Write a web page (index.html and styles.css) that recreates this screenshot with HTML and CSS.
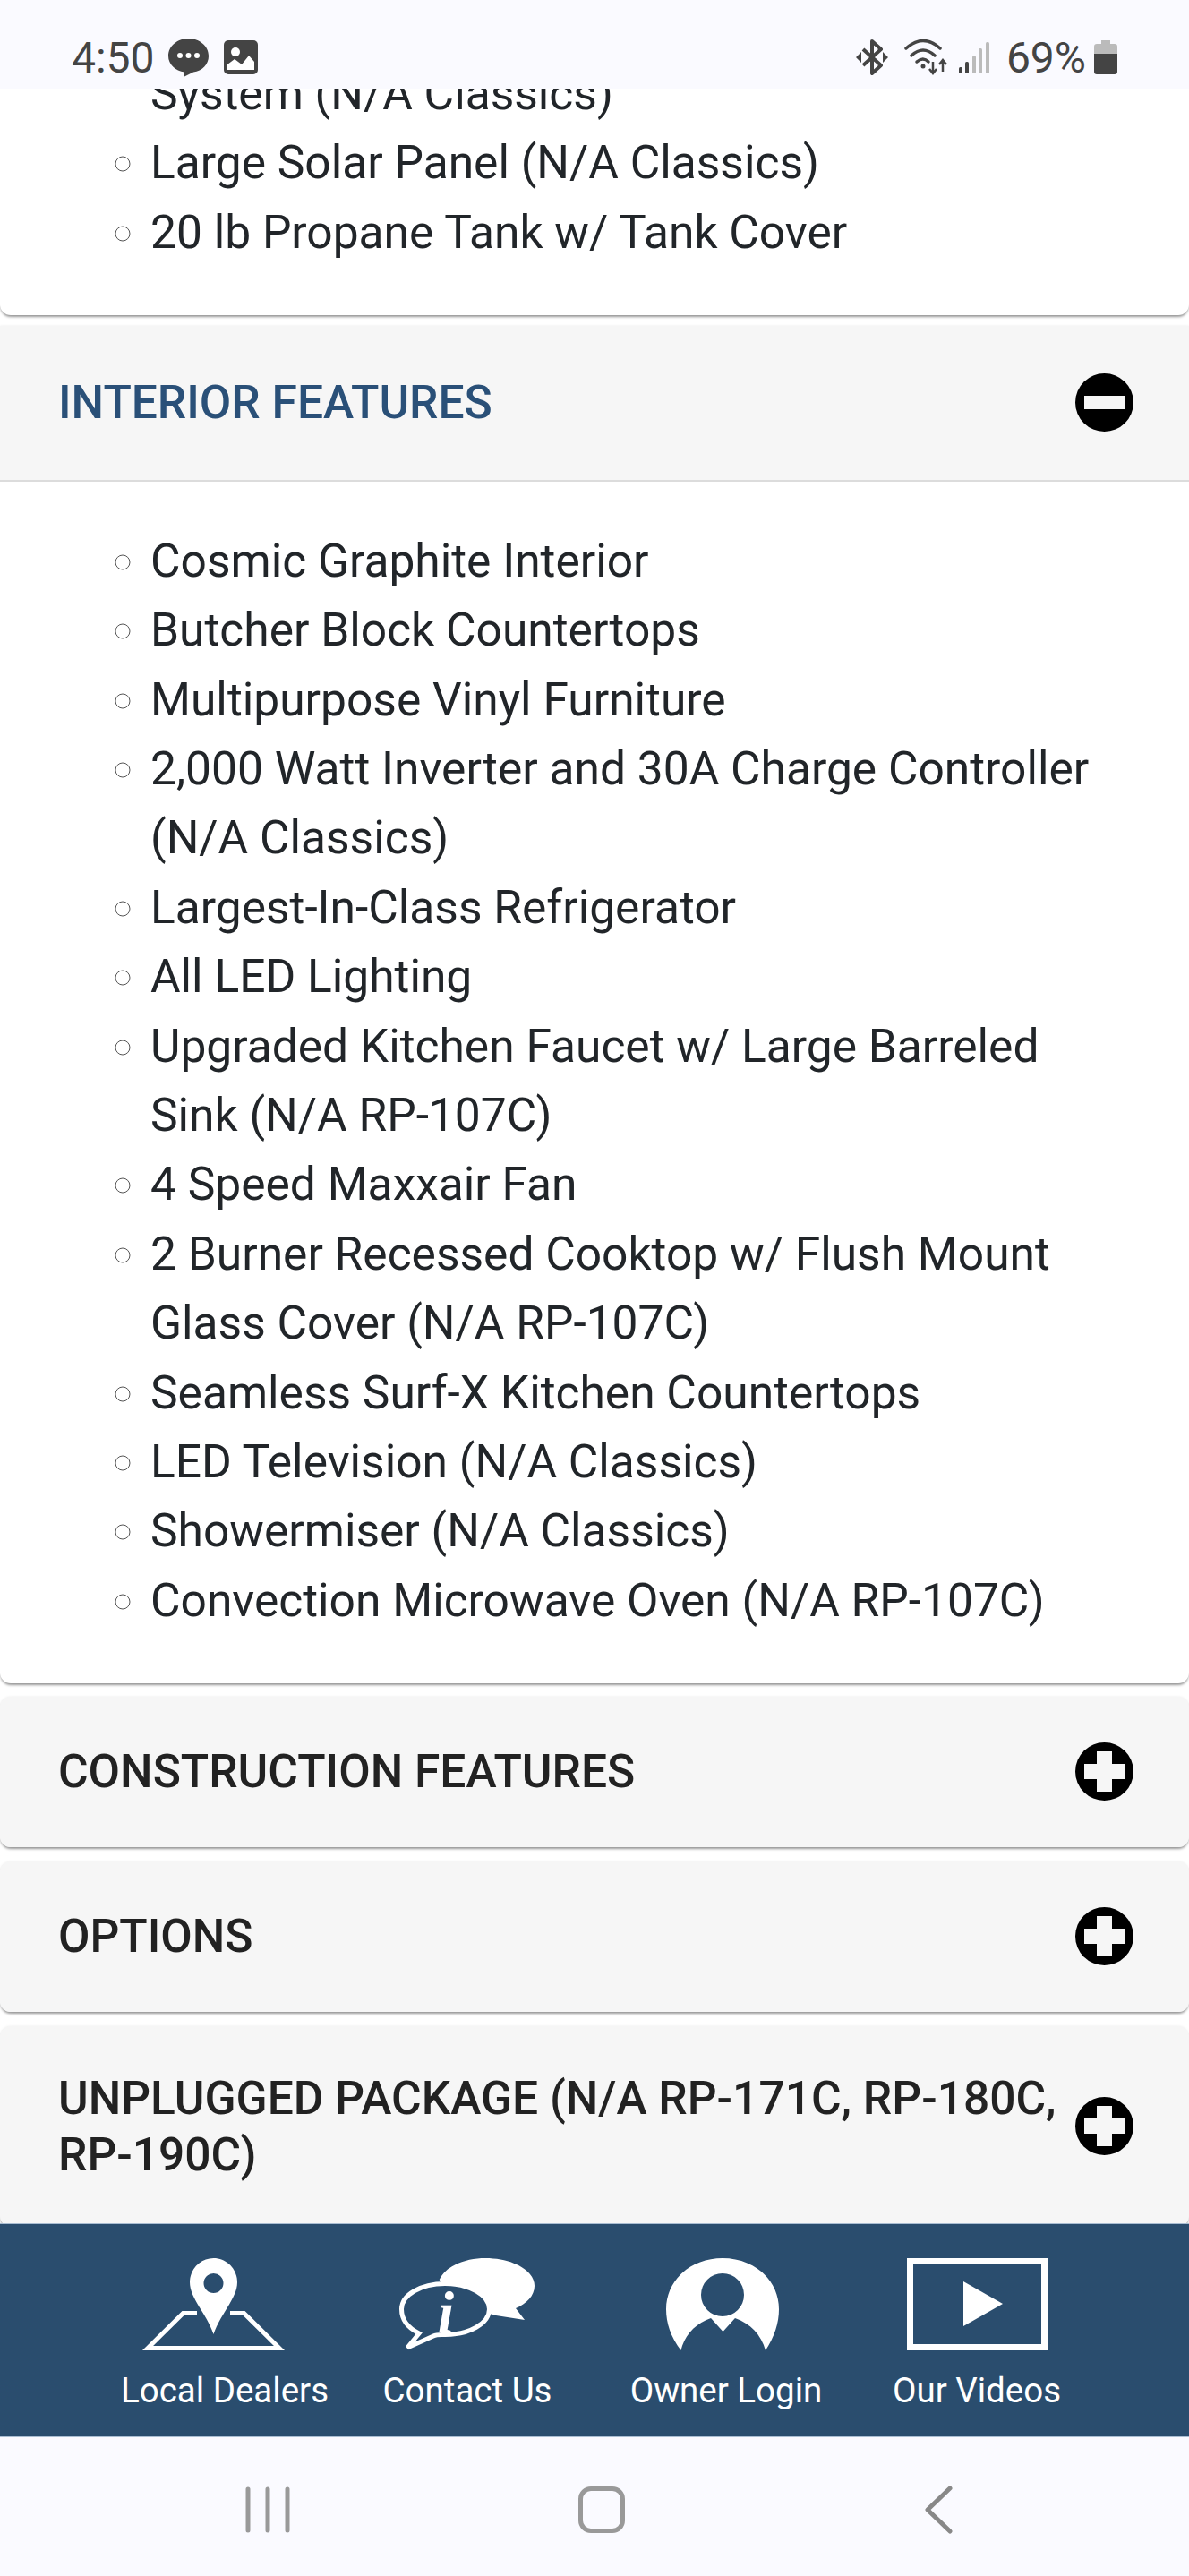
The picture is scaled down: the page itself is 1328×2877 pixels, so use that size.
FILE: index.html
```html
<!DOCTYPE html>
<html lang="en">
<head>
    <meta charset="UTF-8">
    <meta name="viewport" content="width=device-width, initial-scale=1.0">
    <title>Features</title>
    <link rel="stylesheet" href="styles.css">
</head>
<body>
    <div class="status-bar">
        <div class="status-left">
            <span class="clock">4:50</span>
            <svg class="ic-msg" viewBox="0 0 45 43"><path d="M22.5 0C35 0 45 8.500 45 19.500C45 29 38 36 28 37.500L17 43L18 37.500C8 36 0 29 0 19.500C0 8.500 10 0 22.500 0Z" fill="#444"/><circle cx="13" cy="19" r="3" fill="#fff"/><circle cx="22.500" cy="19" r="3" fill="#fff"/><circle cx="32" cy="19" r="3" fill="#fff"/></svg>
            <svg class="ic-pic" viewBox="0 0 38 38"><rect width="38" height="38" rx="5" fill="#444"/><circle cx="13" cy="13" r="5" fill="#fff"/><path d="M4 33V27L12 21L20 27L28 17L34 24V33Z" fill="#fff"/></svg>
        </div>
        <div class="status-right">
            <svg class="ic-bt" viewBox="0 0 36 40"><path d="M8 11L28 29L18 38V2L28 11L8 29" fill="none" stroke="#444" stroke-width="4" stroke-linejoin="round"/><path d="M0 20L6 14V26ZM36 20L30 14V26Z" fill="#444"/></svg>
            <svg class="ic-wifi" viewBox="0 0 50 40"><g fill="none" stroke="#444" stroke-width="3.500" stroke-linecap="round"><path d="M2 10Q21 -7 40 10"/><path d="M8 18Q21 6 34 18"/><path d="M14 25Q21 19 27 25"/></g><circle cx="21" cy="30" r="2.500" fill="#444"/><path d="M32 25V38M28 33L32 38L36 33M43 36V23M39 28L43 23L47 28" fill="none" stroke="#444" stroke-width="2.500"/></svg>
            <svg class="ic-signal" viewBox="0 0 34 36"><rect x="0" y="29" width="4" height="7" rx="1.500" fill="#444"/><rect x="7" y="23" width="4" height="13" rx="1.500" fill="#444"/><rect x="15" y="16" width="4" height="20" rx="1.500" fill="#bbb"/><rect x="22" y="8" width="4" height="28" rx="1.500" fill="#bbb"/><rect x="30" y="1" width="4" height="35" rx="1.500" fill="#bbb"/></svg>
            <span class="battery-pct">69%</span>
            <svg class="ic-battery" viewBox="0 0 26 38"><path d="M8 0H18V4H23Q26 4 26 7V15H0V7Q0 4 3 4H8Z" fill="#bbb"/><path d="M0 15H26V35Q26 38 23 38H3Q0 38 0 35Z" fill="#444"/></svg>
        </div>
    </div>

    <div class="content">
        <div class="panel panel-first">
            <ul class="feature-list">
                <li class="item-continued">System (N/A Classics)</li>
                <li>Large Solar Panel (N/A Classics)</li>
                <li>20 lb Propane Tank w/ Tank Cover</li>
            </ul>
        </div>

        <div class="panel panel-open">
            <div class="panel-head panel-head-open">
                <span class="panel-title panel-title-open">INTERIOR FEATURES</span>
                <svg class="toggle" viewBox="0 0 65 65"><circle cx="32.500" cy="32.500" r="32.500" fill="#000"/><rect x="10" y="25" width="46" height="15" fill="#f6f6f6"/></svg>
            </div>
            <ul class="feature-list">
                <li>Cosmic Graphite Interior</li>
                <li>Butcher Block Countertops</li>
                <li>Multipurpose Vinyl Furniture</li>
                <li>2,000 Watt Inverter and 30A Charge Controller (N/A Classics)</li>
                <li>Largest-In-Class Refrigerator</li>
                <li>All LED Lighting</li>
                <li>Upgraded Kitchen Faucet w/ Large Barreled Sink (N/A RP-107C)</li>
                <li>4 Speed Maxxair Fan</li>
                <li>2 Burner Recessed Cooktop w/ Flush Mount Glass Cover (N/A RP-107C)</li>
                <li>Seamless Surf-X Kitchen Countertops</li>
                <li>LED Television (N/A Classics)</li>
                <li>Showermiser (N/A Classics)</li>
                <li>Convection Microwave Oven (N/A RP-107C)</li>
            </ul>
        </div>

        <div class="panel panel-closed">
            <div class="panel-head">
                <span class="panel-title">CONSTRUCTION FEATURES</span>
                <svg class="toggle" viewBox="0 0 65 65"><circle cx="32.500" cy="32.500" r="32.500" fill="#000"/><path d="M24 10H41V24H55V41H41V55H24V41H10V24H24Z" fill="#f6f6f6"/></svg>
            </div>
        </div>

        <div class="panel panel-closed">
            <div class="panel-head">
                <span class="panel-title">OPTIONS</span>
                <svg class="toggle" viewBox="0 0 65 65"><circle cx="32.500" cy="32.500" r="32.500" fill="#000"/><path d="M24 10H41V24H55V41H41V55H24V41H10V24H24Z" fill="#f6f6f6"/></svg>
            </div>
        </div>

        <div class="panel panel-closed">
            <div class="panel-head panel-head-tall">
                <span class="panel-title">UNPLUGGED PACKAGE (N/A RP-171C, RP-180C, RP-190C)</span>
                <svg class="toggle" viewBox="0 0 65 65"><circle cx="32.500" cy="32.500" r="32.500" fill="#000"/><path d="M24 10H41V24H55V41H41V55H24V41H10V24H24Z" fill="#f6f6f6"/></svg>
            </div>
        </div>
    </div>

    <div class="footer-nav">
        <a class="foot-item">
            <svg class="foot-icon icon-dealers" viewBox="0 0 159 103"><path d="M61 61.500H45.500L6 100.500H153L113.500 61.500H98" fill="none" stroke="#fff" stroke-width="5"/><path fill-rule="evenodd" d="M79.500 85C72 62 53 45 53 27C53 12 65 0 79.500 0C94 0 106 12 106 27C106 45 87 62 79.500 85ZM79.500 17A11 11 0 1 0 79.500 39A11 11 0 1 0 79.500 17Z" fill="#fff"/></svg>
            <span>Local Dealers</span>
        </a>
        <a class="foot-item">
            <svg class="foot-icon icon-chat" viewBox="0 0 153 103"><path d="M44.700 24C52 8 75 0 96 0C127 0 151 14 151 31C151 42 142 51 130 56L140 69L108 64L60 50Z" fill="#fff"/><path d="M22 84C8 77 2.500 67 2.500 57C2.500 41 24 28.500 51 28.500C78 28.500 100.500 41 100.500 57C100.500 73 78 85.500 51 85.500C46 85.500 42 85 38 87L9 100Z" fill="#2a4d6e" stroke="#fff" stroke-width="5"/><text class="chat-i" x="52" y="83" text-anchor="middle">i</text></svg>
            <span>Contact Us</span>
        </a>
        <a class="foot-item">
            <svg class="foot-icon icon-owner" viewBox="0 0 126 103"><path fill-rule="evenodd" d="M16.500 103C5 88 0 72 0 57C0 25 27 0 63 0C99 0 126 25 126 57C126 72 121 88 111 103C106 85 94 73 77 67L63.500 82L50 67C33 73 21 85 16.500 103ZM63 17A24 24 0 1 0 63 65A24 24 0 1 0 63 17Z" fill="#fff"/></svg>
            <span>Owner Login</span>
        </a>
        <a class="foot-item">
            <svg class="foot-icon icon-video" viewBox="0 0 157 103"><rect x="3.500" y="3.500" width="150" height="96" fill="none" stroke="#fff" stroke-width="7"/><path d="M63 26L107 51L63 76Z" fill="#fff"/></svg>
            <span>Our Videos</span>
        </a>
    </div>

    <div class="system-nav">
        <svg class="sys-recent" viewBox="0 0 50 52"><path d="M3 3V49M25 3V49M47 3V49" fill="none" stroke="#999" stroke-width="5" stroke-linecap="round"/></svg>
        <div class="sys-home"></div>
        <svg class="sys-back" viewBox="0 0 32 54"><path d="M29 3L4 27L29 51" fill="none" stroke="#888" stroke-width="5" stroke-linecap="round" stroke-linejoin="round"/></svg>
    </div>
</body>
</html>
```

FILE: styles.css
```css
body {
    font-family: Roboto, "Liberation Sans", sans-serif;
    margin: 0;
    padding: 0;
    width: 1328px;
    height: 2877px;
    overflow: hidden;
    display: flex;
    flex-direction: column;
    background-color: #fff;
    color: #212529;
}

/* phone status bar */
.status-bar {
    height: 99px;
    flex-shrink: 0;
    background-color: #fafaff;
    display: flex;
    justify-content: space-between;
    color: #444;
    font-size: 48px;
    position: relative;
    z-index: 2;
}

.status-left, .status-right {
    display: flex;
    align-items: center;
    height: 128px;
}

.status-left {
    padding-left: 80px;
}

.status-right {
    padding-right: 80px;
}

.clock {
    margin-right: 15px;
}

.ic-msg {
    width: 45px;
    height: 43px;
    margin-right: 17px;
}

.ic-pic {
    width: 38px;
    height: 38px;
}

.ic-bt {
    width: 36px;
    height: 40px;
    margin-right: 18px;
}

.ic-wifi {
    width: 50px;
    height: 40px;
    margin-right: 11px;
}

.ic-signal {
    width: 34px;
    height: 36px;
    margin-right: 19px;
}

.battery-pct {
    margin-right: 9px;
}

.ic-battery {
    width: 26px;
    height: 38px;
}

/* accordion */
.content {
    height: 2384px;
    flex-shrink: 0;
    overflow: hidden;
}

.panel {
    background-color: #fff;
    border-radius: 0 0 12px 12px;
    box-shadow: 0 3px 3px -1px rgba(0, 0, 0, 0.4), 0 0 3px rgba(0, 0, 0, 0.08);
}

.panel-first {
    margin-top: -83px;
    margin-bottom: 12px;
}

.panel-open {
    margin-bottom: 15px;
}

.panel-closed {
    background-color: #f6f6f6;
    border-radius: 12px;
    margin-bottom: 15.5px;
}

.panel-head {
    height: 168.5px;
    display: flex;
    align-items: center;
    justify-content: space-between;
    padding: 0 62px 0 65px;
    background-color: #f6f6f6;
    border-radius: 12px;
}

.panel-head-open {
    height: 172px;
    border-bottom: 2px solid #dcdcdc;
    border-radius: 0;
}

.panel-head-tall {
    height: 224px;
}

.panel-title {
    font-size: 51.5px;
    font-weight: 500;
    line-height: 63px;
    color: #222;
    max-width: 1125px;
}

.panel-title-open {
    color: #2a5078;
}

.toggle {
    width: 65px;
    height: 65px;
    flex-shrink: 0;
}

.feature-list {
    margin: 0;
    padding: 50px 80px 53.5px 168px;
    list-style: circle;
    font-size: 51.5px;
    line-height: 77.4px;
}

.feature-list li::marker {
    color: #555;
}

/* first line of this item is scrolled away under the status bar */
.feature-list .item-continued {
    list-style: none;
}

/* bottom link bar */
.footer-nav {
    height: 239px;
    flex-shrink: 0;
    box-sizing: border-box;
    padding: 38px 0 0 106px;
    background-color: #2a4d6e;
    border-top: 1px solid #a9bdd2;
    border-bottom: 1px solid #a9bdd2;
    display: grid;
    grid-template-columns: 290px 252px 326px 234px;
    position: relative;
    z-index: 2;
}

.foot-item {
    display: flex;
    flex-direction: column;
    align-items: center;
    color: #fff;
    font-size: 38.5px;
    line-height: 44px;
}

.foot-icon {
    height: 103px;
    margin-bottom: 23px;
}

.icon-dealers {
    width: 159px;
    margin-right: 26px;
}

.icon-chat {
    width: 153px;
}

.icon-owner {
    width: 126px;
    margin-right: 8px;
}

.icon-video {
    width: 157px;
}

.chat-i {
    font-family: "Liberation Serif", serif;
    font-style: italic;
    font-weight: bold;
    font-size: 66px;
    fill: #fff;
}

/* phone nav bar */
.system-nav {
    height: 155px;
    flex-shrink: 0;
    background-color: #fafaff;
    display: flex;
    align-items: center;
    padding-top: 7px;
    box-sizing: border-box;
}

.sys-recent {
    width: 50px;
    height: 52px;
    margin-left: 274px;
}

.sys-home {
    width: 42px;
    height: 42px;
    margin-left: 322px;
    border: 5px solid #999;
    border-radius: 14px;
}

.sys-back {
    width: 32px;
    height: 54px;
    margin-left: 334px;
}
```
